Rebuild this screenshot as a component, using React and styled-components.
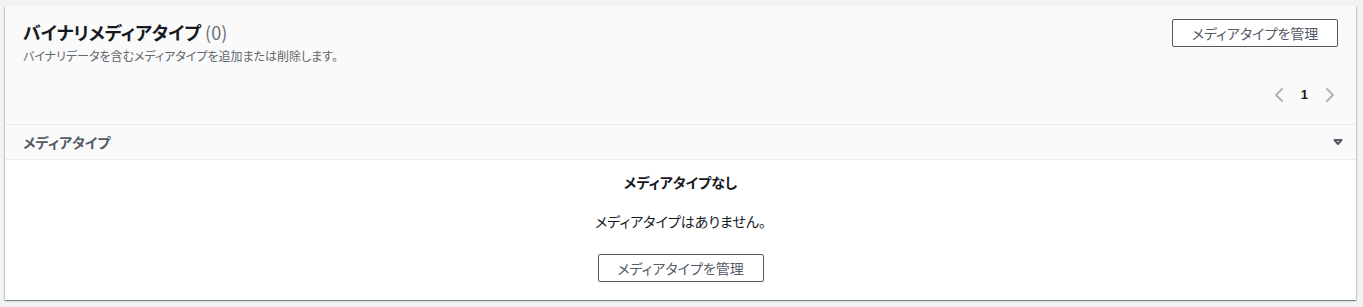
import React from "react";
import styled, { createGlobalStyle } from "styled-components";

const Global = createGlobalStyle`
  html, body { margin: 0; padding: 0; background: #f2f3f3; }
  body {
    font-family: "Noto Sans CJK JP", "Noto Sans", sans-serif;
    font-feature-settings: "palt";
    color: #16191f;
    -webkit-font-smoothing: antialiased;
  }
`;

const Page = styled.div`
  padding: 6px 7px 6px 5px;
`;

const Card = styled.section`
  background: #fff;
  box-shadow: 0 1px 1px 0 rgba(0, 28, 36, 0.3), 1px 1px 1px 0 rgba(0, 28, 36, 0.15),
    -1px 1px 1px 0 rgba(0, 28, 36, 0.15);
`;

const Header = styled.header`
  background: #fafafa;
  padding: 13px 18px 0 18px;
  height: 105px;
  display: flex;
  flex-direction: column;
`;

const HeaderTop = styled.div`
  display: flex;
  justify-content: space-between;
  align-items: flex-start;
`;

const TitleBlock = styled.div`
  display: flex;
  flex-direction: column;
  padding-top: 1px;
`;

const Title = styled.h2`
  margin: 0;
  font-size: 18px;
  line-height: 24px;
  font-weight: 700;
  color: #16191f;
`;

const Count = styled.span`
  font-weight: 400;
  color: #687078;
`;

const Description = styled.p`
  margin: 4px 0 0;
  font-size: 12px;
  line-height: 16px;
  color: #5f666d;
`;

const Button = styled.button`
  font-family: inherit;
  font-feature-settings: "palt";
  font-size: 14px;
  line-height: 20px;
  color: #545b64;
  background: #fff;
  border: 1px solid #545b64;
  border-radius: 2px;
  height: 28px;
  width: ${(p) => p.$w || 165}px;
  padding: 0;
  cursor: pointer;
`;

const PagerRow = styled.div`
  display: flex;
  justify-content: flex-end;
  margin-top: auto;
  padding-bottom: 21px;
`;

const Pager = styled.nav`
  display: flex;
  align-items: center;
  gap: 10px;
`;

const PageNum = styled.span`
  font-family: "Liberation Sans", Arial, sans-serif;
  font-size: 13px;
  font-weight: 700;
  color: #16191f;
  line-height: 16px;
  padding: 0 4px;
`;

const ChevronBox = styled.span`
  display: inline-flex;
  width: 16px;
  height: 16px;
  color: #aab7b8;
`;

const ColumnHead = styled.div`
  display: flex;
  align-items: center;
  justify-content: space-between;
  height: 34px;
  padding: 0 10px 0 18px;
  background: #fafafa;
  border-top: 1px solid #eaeded;
  border-bottom: 1px solid #eaeded;
  font-size: 14px;
  font-weight: 700;
  color: #545b64;
`;

const SortIcon = styled.span`
  display: inline-flex;
  width: 16px;
  height: 16px;
  color: #545b64;
`;

const Empty = styled.div`
  display: flex;
  flex-direction: column;
  align-items: center;
  padding: 12px 0 18px;
`;

const EmptyTitle = styled.b`
  font-size: 14px;
  line-height: 20px;
  font-weight: 700;
  color: #16191f;
`;

const EmptyText = styled.p`
  margin: 19px 0 23px;
  font-size: 14px;
  line-height: 20px;
  color: #16191f;
`;

const Chevron = ({ dir }) => (
  <ChevronBox>
    <svg width="16" height="16" viewBox="0 0 16 16" fill="none">
      <path
        d={dir === "left" ? "M11 2 5 8l6 6" : "M5 2l6 6-6 6"}
        stroke="currentColor"
        strokeWidth="2"
        strokeLinecap="round"
        strokeLinejoin="round"
      />
    </svg>
  </ChevronBox>
);

export default function App() {
  return (
    <>
      <Global />
      <Page>
        <Card>
          <Header>
            <HeaderTop>
              <TitleBlock>
                <Title>
                  バイナリメディアタイプ <Count>(0)</Count>
                </Title>
                <Description>バイナリデータを含むメディアタイプを追加または削除します。</Description>
              </TitleBlock>
              <Button $w={166}>メディアタイプを管理</Button>
            </HeaderTop>
            <PagerRow>
              <Pager>
                <Chevron dir="left" />
                <PageNum>1</PageNum>
                <Chevron dir="right" />
              </Pager>
            </PagerRow>
          </Header>
          <ColumnHead>
            <span>メディアタイプ</span>
            <SortIcon>
              <svg width="16" height="16" viewBox="0 0 16 16" fill="none">
                <path d="M4.5 6h7L8 10z" stroke="currentColor" strokeWidth="2" strokeLinejoin="round" />
              </svg>
            </SortIcon>
          </ColumnHead>
          <Empty>
            <EmptyTitle>メディアタイプなし</EmptyTitle>
            <EmptyText>メディアタイプはありません。</EmptyText>
            <Button $w={166}>メディアタイプを管理</Button>
          </Empty>
        </Card>
      </Page>
    </>
  );
}
